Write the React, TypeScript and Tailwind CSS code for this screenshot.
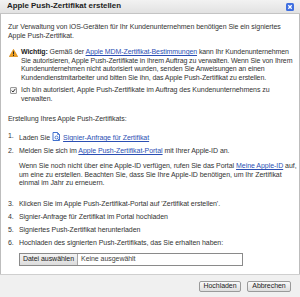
import React from 'react';

const font = { fontFamily: '"Liberation Sans", Arial, sans-serif' };

function CloseIcon() {
  return (
    <svg width="8" height="8" viewBox="0 0 8 8">
      <rect x="0" y="0" width="8" height="8" rx="1.5" fill="#3f6fe0" />
      <path d="M2.3 2.3 L5.7 5.7 M5.7 2.3 L2.3 5.7" stroke="#fff" strokeWidth="1.3" />
    </svg>
  );
}

function WarningIcon() {
  return (
    <svg width="9" height="8" viewBox="0 0 9 8">
      <path d="M4.5 0.3 L8.8 7.7 L0.2 7.7 Z" fill="#f0a020" stroke="#c77800" strokeWidth="0.5" />
      <rect x="4" y="2.4" width="1" height="3" fill="#222" />
      <rect x="4" y="6" width="1" height="1" fill="#222" />
    </svg>
  );
}

function DocIcon() {
  return (
    <svg width="9" height="9" viewBox="0 0 9 9" className="inline-block align-[-1px] mx-[2px]">
      <path d="M1 0.5 H5.5 L7.5 2.5 V8.5 H1 Z" fill="#fff" stroke="#2f63c9" strokeWidth="0.9" />
      <path d="M5.5 0.5 V2.5 H7.5" fill="none" stroke="#2f63c9" strokeWidth="0.7" />
      <circle cx="4.5" cy="5.5" r="1.5" fill="none" stroke="#2f63c9" strokeWidth="0.8" />
      <path d="M5.6 6.6 L7 8" stroke="#2f63c9" strokeWidth="0.9" />
    </svg>
  );
}

function Link({ children }: { children: React.ReactNode }) {
  return <span className="text-[#2b4fb3] underline underline-offset-[1px]">{children}</span>;
}

function Step({ n, children }: { n: number; children: React.ReactNode }) {
  return (
    <div className="flex">
      <span className="w-[11px] shrink-0">{n}.</span>
      <div>{children}</div>
    </div>
  );
}

export default function App() {
  return (
    <div
      className="w-[300px] h-[297px] flex flex-col bg-white text-[7px] leading-[8.5px] tracking-[-0.05px] text-[#333] whitespace-nowrap overflow-hidden"
      style={font}
    >
      <div className="h-[14px] shrink-0 flex items-center justify-between pl-[7px] pr-[6px] bg-gradient-to-b from-[#f2f2f2] to-[#e2e2e2] border-b border-[#c4c4c4]">
        <span className="font-bold text-[7.9px] tracking-normal text-[#222]">Apple Push-Zertifikat erstellen</span>
        <CloseIcon />
      </div>

      <div className="flex-1 flex flex-col border-x border-[#bdbdbd] pl-[7px] pr-[6px] pt-[9px]">
        <p>
          Zur Verwaltung von iOS-Geräten für Ihr Kundenunternehmen benötigen Sie ein signiertes
          <br />
          Apple Push-Zertifikat.
        </p>

        <div className="flex gap-[3px] mt-[8px] pl-[1px]">
          <div className="pt-[1px] shrink-0">
            <WarningIcon />
          </div>
          <p className="tracking-[-0.1px]">
            <b className="text-[#222]">Wichtig:</b> Gemäß der <Link>Apple MDM-Zertifikat-Bestimmungen</Link> kann
            Ihr Kundenunternehmen
            <br />
            Sie autorisieren, Apple Push-Zertifikate in ihrem Auftrag zu verwalten. Wenn Sie von Ihrem
            <br />
            Kundenunternehmen nicht autorisiert wurden, senden Sie Anweisungen an einen
            <br />
            Kundendienstmitarbeiter und bitten Sie ihn, das Apple Push-Zertifikat zu erstellen.
          </p>
        </div>

        <div className="flex gap-[4px] mt-[4px] pl-[2px]">
          <div className="shrink-0 w-[7px] h-[7px] mt-[1px] border border-[#9a9a9a] rounded-[1px] bg-[#f4f4f4] flex items-center justify-center">
            <svg width="5" height="5" viewBox="0 0 5 5">
              <path d="M0.6 2.6 L2 4 L4.4 0.8" fill="none" stroke="#333" strokeWidth="1" />
            </svg>
          </div>
          <p>
            Ich bin autorisiert, Apple Push-Zertifikate im Auftrag des Kundenunternehmens zu
            <br />
            verwalten.
          </p>
        </div>

        <p className="mt-[12px]">Erstellung Ihres Apple Push-Zertifikats:</p>

        <div className="flex flex-col gap-[4.5px] mt-[8.5px]">
          <Step n={1}>
            Laden Sie
            <DocIcon />
            <Link>Signier-Anfrage für Zertifikat</Link>
          </Step>
          <Step n={2}>
            Melden Sie sich im <Link>Apple Push-Zertifikat-Portal</Link> mit Ihrer Apple-ID an.
            <p className="mt-[6.5px] mb-[8px]">
              Wenn Sie noch nicht über eine Apple-ID verfügen, rufen Sie das Portal <Link>Meine Apple-ID</Link> auf,
              <br />
              um eine zu erstellen. Beachten Sie, dass Sie Ihre Apple-ID benötigen, um Ihr Zertifikat
              <br />
              einmal im Jahr zu erneuern.
            </p>
          </Step>
          <Step n={3}>Klicken Sie im Apple Push-Zertifikat-Portal auf 'Zertifikat erstellen'.</Step>
          <Step n={4}>Signier-Anfrage für Zertifikat im Portal hochladen</Step>
          <Step n={5}>Signiertes Push-Zertifikat herunterladen</Step>
          <Step n={6}>Hochladen des signierten Push-Zertifikats, das Sie erhalten haben:</Step>
        </div>

        <div className="ml-[11px] mt-[5px] w-[224px] h-[13px] border border-[#8a8a8a] flex items-center">
          <div className="h-full px-[3px] flex items-center bg-gradient-to-b from-[#f4f4f4] to-[#dcdcdc] border-r border-[#a8a8a8] text-[#222]">
            Datei auswählen
          </div>
          <span className="pl-[3px] text-[#444]">Keine ausgewählt</span>
        </div>
      </div>

      <div className="h-[23px] shrink-0 flex items-center justify-end gap-[6px] pr-[9px] bg-[#f0f0f0] border-t border-[#cfcfcf]">
        <button className="h-[11px] w-[42px] flex items-center justify-center border border-[#9a9a9a] rounded-[2px] bg-gradient-to-b from-[#fafafa] to-[#dedede] text-[#222]">
          Hochladen
        </button>
        <button className="h-[11px] w-[44px] flex items-center justify-center border border-[#9a9a9a] rounded-[2px] bg-gradient-to-b from-[#fafafa] to-[#dedede] text-[#222]">
          Abbrechen
        </button>
      </div>
    </div>
  );
}
